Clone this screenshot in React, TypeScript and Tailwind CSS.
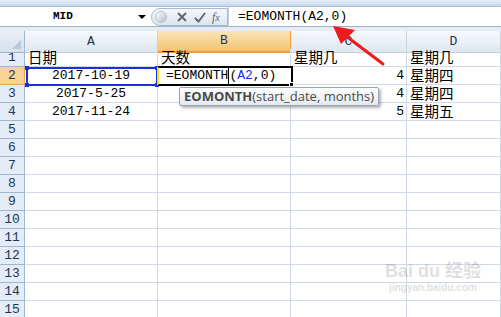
import React from 'react';

const mono = { fontFamily: '"Liberation Mono", "Noto Sans CJK SC", monospace' };

const cols = ['A', 'B', 'C', 'D'];

type Cell = { text?: React.ReactNode; align?: 'left' | 'center' | 'right' };

const cjk = (s: string) => (
  <span className="text-[14.5px] leading-none" style={{ fontFamily: '"Noto Sans CJK SC", sans-serif' }}>
    {s}
  </span>
);

const data: Record<number, Cell[]> = {
  1: [{ text: cjk('日期') }, { text: cjk('天数') }, { text: cjk('星期几') }, { text: cjk('星期几') }],
  2: [{ text: '2017-10-19', align: 'center' }, {}, { text: '4', align: 'right' }, { text: cjk('星期四') }],
  3: [{ text: '2017-5-25', align: 'center' }, {}, { text: '4', align: 'right' }, { text: cjk('星期四') }],
  4: [{ text: '2017-11-24', align: 'center' }, {}, { text: '5', align: 'right' }, { text: cjk('星期五') }],
};

function FormulaBar() {
  return (
    <div className="flex h-[20px] bg-white border-b border-[#9fb1c8]">
      <div className="relative w-[151px] flex items-center pl-[53px]">
        <span className="text-[11px] font-bold text-black" style={mono}>
          MID
        </span>
        <span className="absolute left-[138px] top-[8px] w-0 h-0 border-l-[4px] border-r-[4px] border-t-[4px] border-l-transparent border-r-transparent border-t-black" />
      </div>
      <div className="mt-[1px] h-[18px] w-[77px] rounded-l-full border border-[#a9b9cd] bg-gradient-to-b from-[#f4f7fb] to-[#dde5ef] flex items-center">
        <span className="ml-[3px] w-[12px] h-[12px] rounded-full bg-gradient-to-br from-white to-[#b5bfcc] border border-[#b7c2d0]" />
        <svg className="ml-[10px]" width="10" height="10" viewBox="0 0 10 10">
          <path d="M1 1 L9 9 M9 1 L1 9" stroke="#5a6675" strokeWidth="1.8" />
        </svg>
        <svg className="ml-[7px]" width="12" height="11" viewBox="0 0 12 11">
          <path d="M1 6 L4.5 9.5 L11 1" stroke="#5a6675" strokeWidth="1.9" fill="none" />
        </svg>
        <span
          className="ml-[6px] text-[12px] italic text-[#5a6675]"
          style={{ fontFamily: '"Liberation Serif", serif' }}
        >
          f<span className="text-[10px]">x</span>
        </span>
      </div>
      <div className="flex-1 flex items-center border-l border-[#c3cedb] pl-[9px]">
        <span className="text-[13px] text-black" style={mono}>
          =EOMONTH(A2,0)
        </span>
      </div>
    </div>
  );
}

function Header() {
  return (
    <div className="grid grid-cols-[25px_133px_133px_116px_1fr] h-[18px]">
      <div className="relative bg-gradient-to-b from-[#e9eff7] to-[#d6e0ec] border-r border-b border-[#9eb6ce]">
        <svg className="absolute right-[3px] bottom-[3px]" width="9" height="9" viewBox="0 0 9 9">
          <path d="M9 0 L9 9 L0 9 Z" fill="#b9c7d6" />
        </svg>
      </div>
      {cols.map((c) => (
        <div
          key={c}
          className={
            c === 'B'
              ? 'flex items-center justify-center bg-gradient-to-b from-[#fbe4b8] to-[#f2c46f] border-r border-b-2 border-[#f29b3a] text-[13px] text-[#1f3756]'
              : 'flex items-center justify-center bg-gradient-to-b from-[#f6f9fc] to-[#dfe6ef] border-r border-b border-[#c5d1df] text-[13px] text-[#1f3756]'
          }
          style={mono}
        >
          {c}
        </div>
      ))}
    </div>
  );
}

function Row({ n }: { n: number }) {
  const cells = data[n] || [{}, {}, {}, {}];
  return (
    <div className="grid grid-cols-[25px_133px_133px_116px_1fr] h-[18px]">
      <div
        className={
          n === 2
            ? 'flex items-center justify-center bg-[#f8d393] border-r border-b border-[#e9a94f] text-[13px] leading-none text-[#1f3756]'
            : 'flex items-center justify-center bg-[#e4ecf7] border-r border-b border-[#9eb6ce] text-[13px] leading-none text-[#1f3756]'
        }
        style={mono}
      >
        {n}
      </div>
      {cells.map((cell, i) => (
        <div
          key={i}
          className={
            cell.align === 'center'
              ? 'flex items-center justify-center border-r border-b border-[#d0d7e5] text-[13px] leading-none text-black whitespace-nowrap'
              : cell.align === 'right'
              ? 'flex items-center justify-end pr-[2px] border-r border-b border-[#d0d7e5] text-[13px] leading-none text-black whitespace-nowrap'
              : 'flex items-center pl-[3px] border-r border-b border-[#d0d7e5] text-[13px] leading-none text-black whitespace-nowrap'
          }
          style={mono}
        >
          {cell.text}
        </div>
      ))}
    </div>
  );
}

export default function App() {
  const rows = Array.from({ length: 15 }, (_, i) => i + 1);
  return (
    <div className="relative w-[501px] h-[317px] overflow-hidden bg-white">
      <div className="h-[7px] bg-gradient-to-b from-[#e3edf8] to-[#c8daef] border-b border-[#a8bcd4]" />
      <FormulaBar />
      <div className="h-[4px] bg-[#e6ecf4]" />
      <Header />
      {rows.map((n) => (
        <Row key={n} n={n} />
      ))}

      {/* A2 range highlight */}
      <div className="absolute left-[26px] top-[67px] w-[132px] h-[19px] border-2 border-[#1c2fe0]">
        <span className="absolute -left-[3px] -top-[3px] w-[4px] h-[4px] bg-[#1c2fe0]" />
        <span className="absolute -right-[3px] -top-[3px] w-[4px] h-[4px] bg-[#1c2fe0]" />
        <span className="absolute -left-[3px] -bottom-[3px] w-[4px] h-[4px] bg-[#1c2fe0]" />
        <span className="absolute -right-[3px] -bottom-[3px] w-[4px] h-[4px] bg-[#1c2fe0]" />
      </div>

      {/* B2 edit cell */}
      <div className="absolute left-[157px] top-[66px] w-[136px] h-[20px] border-2 border-black border-l-[#f4e600] bg-white flex items-center pl-[7px]">
        <span className="text-[13px] text-black whitespace-nowrap" style={mono}>
          =EOMONTH
        </span>
        <span className="w-px h-[16px] bg-black" />
        <span className="text-[13px] text-black whitespace-nowrap" style={mono}>
          (<span className="text-[#1c2fe0]">A2</span>,0)
        </span>
        <span className="absolute -right-[3px] -bottom-[3px] w-[5px] h-[5px] bg-black border border-white" />
      </div>

      {/* tooltip */}
      <div
        className="absolute left-[179px] top-[87px] h-[19px] px-[4px] flex items-center rounded-[2px] border border-[#9aa4b2] bg-gradient-to-b from-white to-[#e4e9f1] shadow-[2px_2px_3px_rgba(0,0,0,0.3)] text-[13px] text-[#4a4a4a] whitespace-nowrap"
        style={{ fontFamily: '"Open Sans", "Liberation Sans", sans-serif' }}
      >
        <span className="font-bold">EOMONTH</span>(start_date, months)
      </div>

      {/* red arrow */}
      <svg className="absolute left-0 top-0" width="501" height="317" viewBox="0 0 501 317">
        <line x1="383" y1="64" x2="342" y2="33" stroke="#ee1c1c" strokeWidth="3" strokeLinecap="round" />
        <path d="M333 26 L355 30 L341 44 Z" fill="#ee1c1c" />
      </svg>

      {/* watermark */}
      <div className="absolute left-[385px] top-[262px] flex flex-col items-center opacity-[0.18] text-[#555] leading-none whitespace-nowrap">
        <span className="text-[18px] font-bold" style={{ fontFamily: '"Liberation Sans", "Noto Sans CJK SC", sans-serif' }}>
          Bai du 经验
        </span>
        <span className="text-[10px] font-bold mt-[3px]" style={{ fontFamily: '"Liberation Sans", sans-serif' }}>
          jingyan.baidu.com
        </span>
      </div>
    </div>
  );
}
